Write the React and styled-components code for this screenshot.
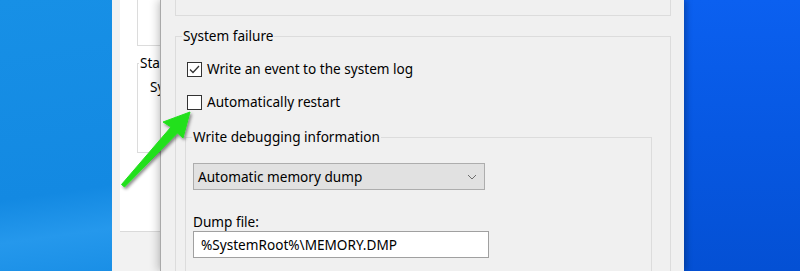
import styled, { createGlobalStyle } from "styled-components";

const GlobalStyle = createGlobalStyle`
  html, body {
    margin: 0;
    padding: 0;
    overflow: hidden;
    background: #0a5ae6;
  }
  body {
    font-family: "Noto Sans", "Liberation Sans", sans-serif;
  }
`;

const Screen = styled.div`
  position: relative;
  display: flex;
  width: 800px;
  height: 271px;
  overflow: hidden;
`;

const Desktop = styled.div`
  flex: none;
  width: ${(p) => p.$width}px;
  background: ${(p) =>
    p.$side === "left"
      ? "linear-gradient(172deg, #1790e6 0%, #1389e2 70%, #2598ec 85%, #1a8fe6 100%)"
      : "linear-gradient(180deg, #0b60f0 0%, #0758e2 50%, #0450d4 100%)"};
`;

const BackWindow = styled.div`
  flex: none;
  width: 48px;
  background: #f2f2f2;
  padding-left: 8px;
  box-sizing: border-box;
  overflow: hidden;
  font-size: 13.6px;
  color: #000;
`;

const TabPage = styled.div`
  height: 232px;
  width: 200px;
  background: #fff;
  border-bottom: 1px solid #dadada;
  padding-left: 17px;
  box-sizing: border-box;
`;

const BackBox = styled.div`
  height: 46px;
  border-left: 1px solid #dcdcdc;
  border-bottom: 1px solid #dcdcdc;
  box-sizing: border-box;
`;

const BackGroup = styled.fieldset`
  margin: 7px 0 0 0;
  padding: 0;
  height: 100px;
  border: 1px solid #dcdcdc;
  border-right: none;
  box-sizing: border-box;
  legend {
    margin-left: 1px;
    padding: 0 1px;
    line-height: 20px;
  }
`;

const BackText = styled.div`
  margin: 4px 0 0 12px;
  line-height: 20px;
`;

const Dialog = styled.div`
  flex: none;
  position: relative;
  z-index: 1;
  width: 524px;
  background: #f0f0f0;
  border-left: 1px solid #a9a9a9;
  box-shadow: -3px 0 8px rgba(0, 0, 0, 0.18), 3px 0 6px rgba(0, 0, 0, 0.2);
  box-sizing: border-box;
  padding: 0 13px 0 14px;
  font-size: 13.6px;
  color: #000;
`;

const TopGroup = styled.div`
  height: 16px;
  border: 1px solid #dcdcdc;
  border-top: none;
  box-sizing: border-box;
`;

const Group = styled.fieldset`
  margin: ${(p) => p.$margin};
  padding: 0;
  border: 1px solid #dcdcdc;
  min-width: 0;
  height: 400px;
  box-sizing: border-box;
  legend {
    margin-left: 6px;
    padding: 0 1px;
    line-height: 20px;
  }
`;

const GroupBody = styled.div`
  padding: ${(p) => p.$padding};
`;

const CheckRow = styled.label`
  display: flex;
  align-items: center;
  gap: 5px;
  height: 20px;
  margin: ${(p) => p.$margin};
  padding-left: 11px;
  line-height: 20px;
`;

const Box = styled.span`
  flex: none;
  width: 15px;
  height: 15px;
  border: 1px solid #333;
  box-sizing: border-box;
  background: #fff;
  display: flex;
  align-items: center;
  justify-content: center;
`;

const Select = styled.div`
  display: flex;
  align-items: center;
  justify-content: space-between;
  width: 292px;
  height: 27px;
  box-sizing: border-box;
  padding: 0 7px 0 4px;
  background: #e1e1e1;
  border: 1px solid #adadad;
`;

const FieldLabel = styled.div`
  margin-top: 23px;
  line-height: 18px;
`;

const TextInput = styled.div`
  display: flex;
  align-items: center;
  width: 296px;
  height: 27px;
  box-sizing: border-box;
  padding-left: 7px;
  background: #fff;
  border: 1px solid #a0a0a0;
`;

const Overlay = styled.svg`
  position: absolute;
  left: 0;
  top: 0;
  z-index: 5;
  pointer-events: none;
`;

const Checkbox = ({ checked }) => (
  <Box>
    {checked && (
      <svg width="13" height="13" viewBox="0 0 13 13">
        <path d="M2 6.5 L5 9.5 L11 3" fill="none" stroke="#333" strokeWidth="1.3" />
      </svg>
    )}
  </Box>
);

const Arrow = () => (
  <Overlay width="800" height="271" viewBox="0 0 800 271">
    <defs>
      <filter id="sh" x="-20%" y="-20%" width="140%" height="140%">
        <feDropShadow dx="1.5" dy="2" stdDeviation="1.5" floodColor="#000" floodOpacity="0.45" />
      </filter>
    </defs>
    <polygon
      points="190,112 183,138 177.5,133 124.5,187 121.5,184.5 171,127 163,122"
      fill="#22e01f"
      stroke="#22e01f"
      strokeWidth="1"
      strokeLinejoin="round"
      filter="url(#sh)"
    />
  </Overlay>
);

export default function App() {
  return (
    <>
      <GlobalStyle />
      <Screen>
        <Desktop $side="left" $width={112} />
        <BackWindow>
          <TabPage>
            <BackBox />
            <BackGroup>
              <legend>Startup</legend>
              <BackText>System</BackText>
            </BackGroup>
          </TabPage>
        </BackWindow>
        <Dialog>
          <TopGroup />
          <Group $margin="10px 0 0 0">
            <legend>System failure</legend>
            <GroupBody $padding="13px 0 0 0">
              <CheckRow $margin="0">
                <Checkbox checked />
                Write an event to the system log
              </CheckRow>
              <CheckRow $margin="13px 0 0 0">
                <Checkbox />
                Automatically restart
              </CheckRow>
              <Group $margin="15px 18px 0 9px">
                <legend>Write debugging information</legend>
                <GroupBody $padding="16px 0 0 7px">
                  <Select>
                    Automatic memory dump
                    <svg width="10" height="6" viewBox="0 0 10 6">
                      <path d="M1 1 L5 5 L9 1" fill="none" stroke="#6d6d6d" strokeWidth="1" />
                    </svg>
                  </Select>
                  <FieldLabel>Dump file:</FieldLabel>
                  <TextInput>%SystemRoot%\MEMORY.DMP</TextInput>
                </GroupBody>
              </Group>
            </GroupBody>
          </Group>
        </Dialog>
        <Desktop $side="right" $width={116} />
        <Arrow />
      </Screen>
    </>
  );
}
